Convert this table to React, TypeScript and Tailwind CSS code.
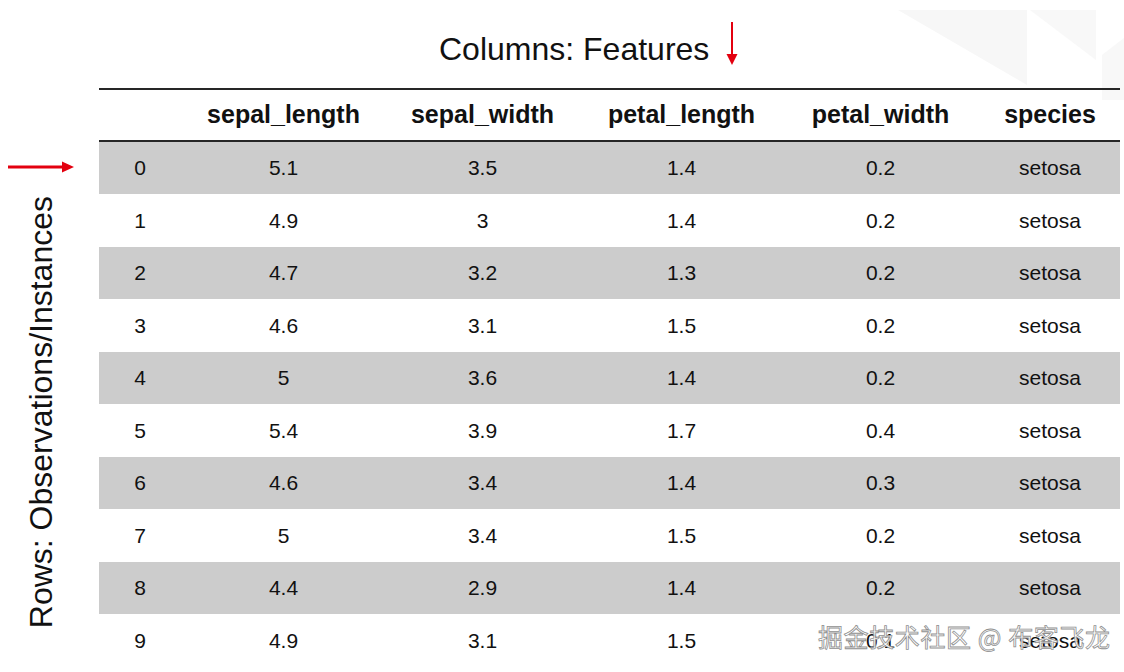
const COLUMNS = ["sepal_length", "sepal_width", "petal_length", "petal_width", "species"];

const ROWS = [
  [5.1, 3.5, 1.4, 0.2, "setosa"],
  [4.9, 3, 1.4, 0.2, "setosa"],
  [4.7, 3.2, 1.3, 0.2, "setosa"],
  [4.6, 3.1, 1.5, 0.2, "setosa"],
  [5, 3.6, 1.4, 0.2, "setosa"],
  [5.4, 3.9, 1.7, 0.4, "setosa"],
  [4.6, 3.4, 1.4, 0.3, "setosa"],
  [5, 3.4, 1.5, 0.2, "setosa"],
  [4.4, 2.9, 1.4, 0.2, "setosa"],
  [4.9, 3.1, 1.5, 0.1, "setosa"],
];

function ArrowDown() {
  return (
    <svg width="12" height="44" viewBox="0 0 12 44">
      <line x1="6" y1="0" x2="6" y2="34" stroke="#e3000f" strokeWidth="2" />
      <polygon points="0.5,32 11.5,32 6,43" fill="#e3000f" />
    </svg>
  );
}

function ArrowRight() {
  return (
    <svg width="68" height="12" viewBox="0 0 68 12">
      <line x1="0" y1="6" x2="56" y2="6" stroke="#e3000f" strokeWidth="3" />
      <polygon points="54,0.5 54,11.5 66,6" fill="#e3000f" />
    </svg>
  );
}

export default function App() {
  return (
    <div className="relative h-[672px] w-[1124px] overflow-hidden bg-white font-['Liberation_Sans',Arial,sans-serif] text-[#111]">
      {/* faint background shapes */}
      <svg
        className="pointer-events-none absolute right-0 top-0"
        width="240"
        height="110"
        viewBox="0 0 240 110"
      >
        <polygon points="14,10 143,10 143,85" fill="#f7f7f7" />
        <polygon points="146,10 212,10 212,60" fill="#f8f8f8" />
        <polygon points="240,38 218,55 218,100 240,100" fill="#f8f8f8" />
      </svg>

      <div className="relative flex h-full">
        {/* left label */}
        <div className="flex w-[99px] flex-col">
          <div className="ml-[8px] mt-[161px] flex">
            <ArrowRight />
          </div>
          <div className="flex-1" />
          <div className="mb-[44px] ml-[25px] rotate-180 text-[32px] leading-[32px] [writing-mode:vertical-rl]">
            Rows: Observations/Instances
          </div>
        </div>

        {/* table side */}
        <div className="flex w-[1021px] flex-col">
          <div className="flex h-[88px] items-start pl-[340px]">
            <div className="mt-[33px] text-[32px] leading-[32px]">Columns: Features</div>
            <div className="ml-[17px] mt-[22px] flex">
              <ArrowDown />
            </div>
          </div>

          <div className="border-y-[2.5px] border-[#262626]">
            <div className="grid h-[49.5px] grid-cols-[85px_199px_199px_199px_199px_140px] items-center text-[25px] font-bold">
              <div />
              {COLUMNS.map((c) => (
                <div key={c} className="text-center">
                  {c}
                </div>
              ))}
            </div>
          </div>

          {ROWS.map((row, i) => (
            <div
              key={i}
              className={`grid h-[52.5px] shrink-0 grid-cols-[85px_199px_199px_199px_199px_140px] items-center text-[21px] ${
                i % 2 === 0 ? "bg-[#cccccc]" : "bg-white"
              }`}
            >
              <div className="pr-[3px] text-center">{i}</div>
              {row.map((v, j) => (
                <div key={j} className="text-center">
                  {v}
                </div>
              ))}
            </div>
          ))}
        </div>
      </div>

      {/* watermark */}
      <div className="pointer-events-none absolute left-[818px] top-[621px] whitespace-nowrap font-['Noto_Sans_CJK_SC',sans-serif] text-[25px] leading-[30px] tracking-[0.6px] text-white/90 [-webkit-text-stroke:0.8px_#8f8f8f]">
        掘金技术社区 @ 布客飞龙
      </div>
    </div>
  );
}
